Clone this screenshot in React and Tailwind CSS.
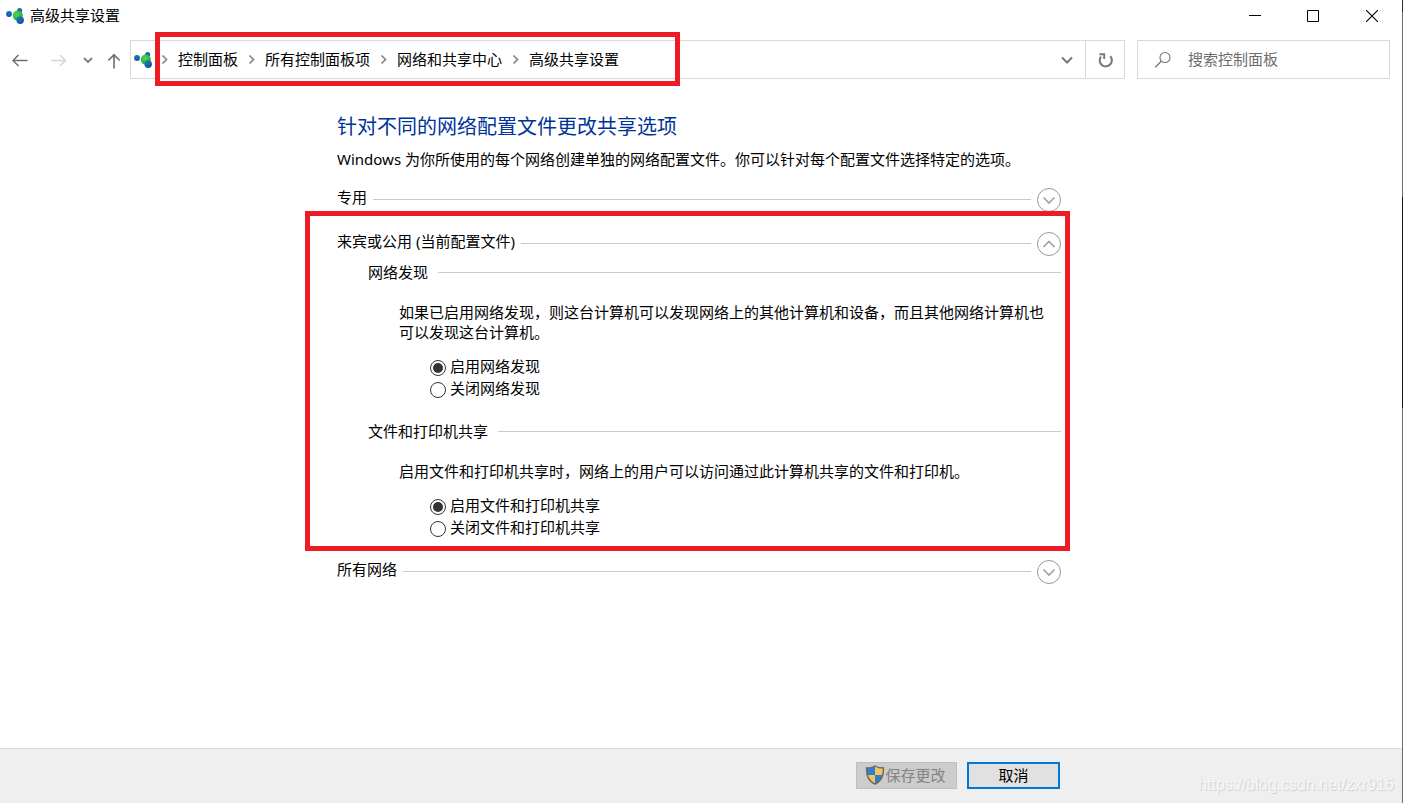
import { useState } from 'react';

function NetworkIcon() {
  return (
    <svg width="18" height="18" viewBox="0 0 18 18" aria-hidden="true" className="shrink-0">
      <defs>
        <radialGradient id="green" cx="40%" cy="35%" r="65%">
          <stop offset="0" stopColor="#4fd455" />
          <stop offset="1" stopColor="#1fae3c" />
        </radialGradient>
        <radialGradient id="blue" cx="40%" cy="35%" r="65%">
          <stop offset="0" stopColor="#2473be" />
          <stop offset="1" stopColor="#0b559f" />
        </radialGradient>
      </defs>
      <circle cx="13.6" cy="3.4" r="2.5" fill="url(#blue)" />
      <circle cx="3" cy="7" r="2.900" fill="url(#blue)" />
      <circle cx="11.8" cy="8.6" r="5" fill="url(#green)" />
      <circle cx="14.2" cy="13.2" r="3.700" fill="url(#blue)" />
    </svg>
  );
}

function ShieldIcon() {
  return (
    <svg width="20" height="20" viewBox="0 0 20 20" aria-hidden="true" className="mb-0.5 shrink-0">
      <clipPath id="shield">
        <path d="M10 1C7.800 2.500 5 3.100 1.500 3.100c0 7.500 1.600 12.600 8.500 16 6.900-3.400 8.500-8.500 8.500-16-3.500 0-6.300-.6-8.500-2.100z" />
      </clipPath>
      <g clipPath="url(#shield)">
        <path d="M0 0h10v10H0zM10 10h10v10H10z" fill="#2f7fd0" />
        <path d="M10 0h10v10H10zM0 10h10v10H0z" fill="#f6c35c" />
      </g>
      <path
        d="M10 1C7.800 2.500 5 3.100 1.500 3.100c0 7.500 1.600 12.600 8.500 16 6.900-3.400 8.500-8.500 8.500-16-3.500 0-6.300-.6-8.500-2.100z"
        fill="none"
        stroke="#6b6b6b"
        strokeWidth="1.500"
      />
    </svg>
  );
}

function CrumbArrow() {
  return (
    <svg width="27" height="12" viewBox="0 0 27 12" aria-hidden="true" className="shrink-0">
      <path d="M11.500 1.500 15.500 5.500l-4 4" fill="none" stroke="#858585" strokeWidth="1.700" />
    </svg>
  );
}

function SectionHeader({ title, open, onToggle }) {
  return (
    <div className="flex h-6 items-center">
      <h2 className="pb-1.5 leading-5">{title}</h2>
      <div className="mx-1.5 mb-px h-px flex-1 bg-[#c9c9c9]" />
      <button
        type="button"
        aria-label={title}
        aria-expanded={open}
        onClick={onToggle}
        className="flex size-6 items-center justify-center rounded-full border border-[#999]"
      >
        <svg width="14" height="10" viewBox="0 0 14 10" aria-hidden="true">
          <path
            d={open ? 'M1.500 8 7 2.500 12.500 8' : 'M1.500 2.500 7 8l5.500-5.500'}
            fill="none"
            stroke="#a3a3a3"
            strokeWidth="1.700"
          />
        </svg>
      </button>
    </div>
  );
}

function Option({ name, value, label, defaultChecked }) {
  return (
    <label className="flex h-[22px] items-center gap-1">
      <input
        type="radio"
        name={name}
        value={value}
        defaultChecked={defaultChecked}
        className="grid size-4 appearance-none place-content-center rounded-full border border-[#333] bg-white before:size-[10px] before:rounded-full before:content-[''] checked:before:bg-[#333]"
      />
      <span className="pb-1 leading-5">{label}</span>
    </label>
  );
}

function Setting({ name, title, text, on, off }) {
  return (
    <fieldset className="pl-[31px]">
      <legend className="contents">
        <span className="flex items-center leading-5">
          {title}
          <span className="ml-2.5 h-px flex-1 bg-[#c9c9c9]" />
        </span>
      </legend>
      <div className="pl-[31px]">
        <p className="mt-5 pr-4 leading-5">{text}</p>
        <div className="mt-[15px] pl-[31px]">
          <Option name={name} value="on" label={on} defaultChecked />
          <Option name={name} value="off" label={off} />
        </div>
      </div>
    </fieldset>
  );
}

const crumbs = ['控制面板', '所有控制面板项', '网络和共享中心', '高级共享设置'];

export default function App() {
  const [open, setOpen] = useState('guest');
  const toggle = (id) => setOpen(open === id ? '' : id);

  return (
    <div className="flex min-h-screen bg-white font-['Noto_Sans','Noto_Sans_CJK_SC',sans-serif] text-[15px] text-black">
      <div className="flex min-w-0 flex-1 flex-col">
        <header>
          <div className="flex h-8 items-center pl-1.5">
            <NetworkIcon />
            <h1 className="ml-1.5 flex-1 pb-0.5 leading-5">高级共享设置</h1>
            <button type="button" aria-label="最小化" className="flex h-8 w-[58px] items-center justify-center">
              <svg width="12" height="12" viewBox="0 0 12 12">
                <path d="M0 5.500h12" stroke="#000" />
              </svg>
            </button>
            <button type="button" aria-label="最大化" className="flex h-8 w-[58px] items-center justify-center">
              <svg width="12" height="12" viewBox="0 0 12 12">
                <path d="M.5.5h11v11H.5z" fill="none" stroke="#000" />
              </svg>
            </button>
            <button type="button" aria-label="关闭" className="flex h-8 w-[60px] items-center justify-center">
              <svg width="12" height="12" viewBox="0 0 12 12">
                <path d="M0 0 12 12M12 0 0 12" stroke="#000" strokeWidth="1.100" />
              </svg>
            </button>
          </div>

          <div className="flex items-center pt-2 pr-3">
            <button type="button" aria-label="后退" className="flex h-8 w-10 items-center justify-center">
              <svg width="16" height="14" viewBox="0 0 16 14">
                <path d="M15.500 7.500H1M6.500 2 1 7.500 6.500 13" fill="none" stroke="#6f6f6f" strokeWidth="1.500" />
              </svg>
            </button>
            <button type="button" aria-label="前进" disabled className="flex h-8 w-[38px] items-center justify-center">
              <svg width="16" height="14" viewBox="0 0 16 14">
                <path d="M0 7.500h14.500M9 2l5.500 5.500L9 13" fill="none" stroke="#d6d6d6" strokeWidth="1.500" />
              </svg>
            </button>
            <button type="button" aria-label="最近浏览的位置" className="flex h-8 w-5 items-center justify-center">
              <svg width="10" height="8" viewBox="0 0 10 8">
                <path d="M1 2l4 4 4-4" fill="none" stroke="#7a7a7a" strokeWidth="1.800" />
              </svg>
            </button>
            <button type="button" aria-label="向上" className="flex h-8 w-8 items-center justify-center">
              <svg width="14" height="18" viewBox="0 0 14 18">
                <path d="M7 17.500V3.500M1.300 9.500 7 3.800l5.700 5.700" fill="none" stroke="#757575" strokeWidth="1.700" />
              </svg>
            </button>

            <div className="flex h-[39px] flex-1 items-stretch border border-[#d9d9d9]">
              <div className="relative flex flex-1 items-center">
                <div className="flex w-5 items-center pl-[3px]">
                  <NetworkIcon />
                </div>
                <nav aria-label="路径">
                  <ol className="flex">
                    {crumbs.map((c) => (
                      <li key={c} className="flex items-center">
                        <CrumbArrow />
                        <a href="#" className="pb-0.5 leading-5 whitespace-nowrap">
                          {c}
                        </a>
                      </li>
                    ))}
                  </ol>
                </nav>
                <div className="pointer-events-none absolute -top-[9px] left-6 h-[54px] w-[525px] border-[5px] border-[#ed1c24]" />
              </div>
              <button type="button" aria-label="以前的位置" className="flex w-9 items-center justify-center">
                <svg width="12" height="8" viewBox="0 0 12 8">
                  <path d="M1 1.500 6 6.500l5-5" fill="none" stroke="#777" strokeWidth="2" />
                </svg>
              </button>
              <button
                type="button"
                aria-label="刷新"
                className="flex w-[39px] items-center justify-center border-l border-[#d9d9d9]"
              >
                <svg width="16" height="16" viewBox="0 0 16 16">
                  <path d="M3.900 4.600A6.100 6.100 0 1 0 13.300 4.200" fill="none" stroke="#777" strokeWidth="2" />
                  <path d="M2.400 2.200H7.200V7" fill="none" stroke="#777" strokeWidth="1.900" />
                </svg>
              </button>
            </div>

            <form
              role="search"
              onSubmit={(e) => e.preventDefault()}
              className="ml-3 flex h-[39px] w-[253px] items-center border border-[#d9d9d9] pl-4"
            >
              <svg width="18" height="18" viewBox="0 0 18 18" aria-hidden="true" className="shrink-0">
                <circle cx="11" cy="6.500" r="5" fill="none" stroke="#777" strokeWidth="1.100" />
                <path d="M7.300 10.200 1.300 16.200" stroke="#777" strokeWidth="1.300" />
              </svg>
              <input
                type="text"
                aria-label="搜索控制面板"
                placeholder="搜索控制面板"
                className="ml-4 min-w-0 flex-1 pb-0.5 leading-5 outline-none placeholder:text-[#6d6d6d]"
              />
            </form>
          </div>
        </header>

        <main className="mx-auto w-full max-w-[728px] flex-1 pt-[34px] pr-1">
          <h2 className="text-xl leading-7 text-[#003399]">针对不同的网络配置文件更改共享选项</h2>
          <p className="mt-2 leading-5">
            Windows 为你所使用的每个网络创建单独的网络配置文件。你可以针对每个配置文件选择特定的选项。
          </p>
          <div className="mt-[19px] flex flex-col gap-5">
            <SectionHeader title="专用" open={open === 'private'} onToggle={() => toggle('private')} />
            <section className="relative">
              <SectionHeader title="来宾或公用 (当前配置文件)" open={open === 'guest'} onToggle={() => toggle('guest')} />
              {open === 'guest' && (
                <div className="flex flex-col gap-5 pt-1.5">
                  <Setting
                    name="discovery"
                    title="网络发现"
                    text="如果已启用网络发现，则这台计算机可以发现网络上的其他计算机和设备，而且其他网络计算机也可以发现这台计算机。"
                    on="启用网络发现"
                    off="关闭网络发现"
                  />
                  <Setting
                    name="sharing"
                    title="文件和打印机共享"
                    text="启用文件和打印机共享时，网络上的用户可以访问通过此计算机共享的文件和打印机。"
                    on="启用文件和打印机共享"
                    off="关闭文件和打印机共享"
                  />
                </div>
              )}
              <div className="pointer-events-none absolute -top-[21px] -right-[9px] -bottom-[11px] -left-8 border-[5px] border-[#ed1c24]" />
            </section>
            <SectionHeader title="所有网络" open={open === 'all'} onToggle={() => toggle('all')} />
          </div>
        </main>

        <footer className="relative h-[55px] border-t border-[#dcdcdc] bg-[#efefef]">
          <div className="mx-auto flex w-full max-w-[728px] justify-end gap-2.5 pt-[13px] pr-[5px]">
            <button
              type="button"
              disabled
              className="flex h-[27px] w-[101px] items-center justify-center border border-[#bfbfbf] bg-[#ccc] pr-0.5 text-[#838383]"
            >
              <ShieldIcon />
              保存更改
            </button>
            <button
              type="button"
              className="flex h-[27px] w-[93px] items-center justify-center border-2 border-[#0078d7] bg-[#e1e1e1] pb-0.5 leading-5"
            >
              取消
            </button>
          </div>
          <span className="absolute right-2 bottom-2 font-['Liberation_Sans',sans-serif] text-base leading-5 text-[#f6f6f6] [text-shadow:1px_1px_1px_#cfcfcf]">
            https://blog.csdn.net/zxr916
          </span>
        </footer>
      </div>
      <div className="w-px bg-[linear-gradient(to_bottom,#3b2a26_0_12px,#6e6e6e_12px_197px,#1a1a1a_197px_408px,#6e6e6e_408px)]" />
    </div>
  );
}
